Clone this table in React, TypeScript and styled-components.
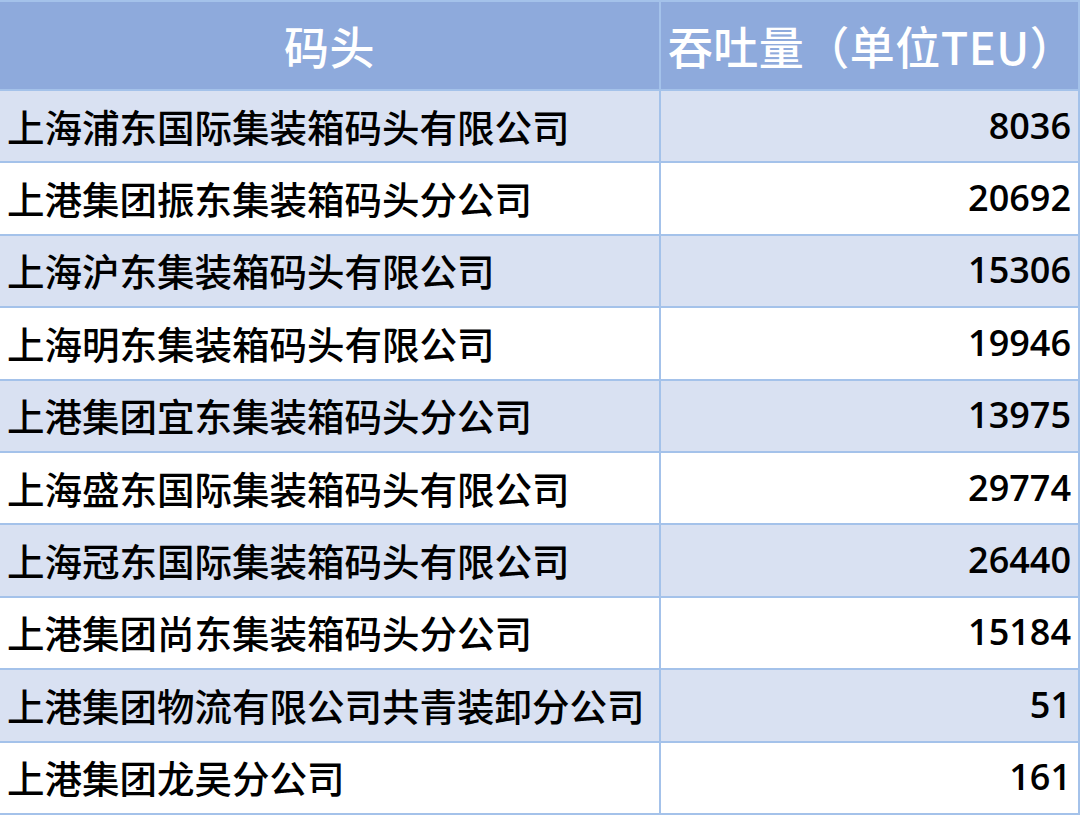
import styled, { createGlobalStyle } from 'styled-components';

const GlobalStyle = createGlobalStyle`
  html, body {
    margin: 0;
    padding: 0;
    background: #ffffff;
  }
`;

const lineColor = '#a4c2ea';

const Table = styled.div`
  width: 1080px;
  height: 815px;
  display: grid;
  grid-template-columns: 661px 419px;
  grid-template-rows: 89px repeat(10, 72.4px);
  border-top: 2px solid ${lineColor};
  box-sizing: border-box;
  font-family: 'Noto Sans CJK SC', 'Noto Sans', sans-serif;
`;

const HeadCell = styled.div<{ $last?: boolean }>`
  background: #8eaadc;
  color: #ffffff;
  font-size: 45px;
  font-weight: 500;
  display: flex;
  align-items: center;
  justify-content: center;
  border-bottom: 2px solid ${lineColor};
  border-right: 2px solid ${lineColor};
  box-sizing: border-box;
  padding-left: ${(p) => (p.$last ? '4px' : '0')};
  letter-spacing: 0.5px;
`;

const Cell = styled.div<{ $shade: boolean; $num?: boolean }>`
  background: ${(p) => (p.$shade ? '#d9e1f2' : '#ffffff')};
  color: #000000;
  font-size: ${(p) => (p.$num ? '36px' : '37.5px')};
  font-weight: ${(p) => (p.$num ? 600 : 500)};
  display: flex;
  align-items: center;
  justify-content: ${(p) => (p.$num ? 'flex-end' : 'flex-start')};
  padding: ${(p) => (p.$num ? '0 7px 2px 0' : '0 0 2px 7px')};
  border-bottom: 2px solid ${lineColor};
  border-right: 2px solid ${lineColor};
  box-sizing: border-box;
  font-family: ${(p) =>
    p.$num ? "'Open Sans', 'Noto Sans', sans-serif" : "'Noto Sans CJK SC', sans-serif"};
  white-space: nowrap;
`;

const rows: [string, string][] = [
  ['上海浦东国际集装箱码头有限公司', '8036'],
  ['上港集团振东集装箱码头分公司', '20692'],
  ['上海沪东集装箱码头有限公司', '15306'],
  ['上海明东集装箱码头有限公司', '19946'],
  ['上港集团宜东集装箱码头分公司', '13975'],
  ['上海盛东国际集装箱码头有限公司', '29774'],
  ['上海冠东国际集装箱码头有限公司', '26440'],
  ['上港集团尚东集装箱码头分公司', '15184'],
  ['上港集团物流有限公司共青装卸分公司', '51'],
  ['上港集团龙吴分公司', '161'],
];

export default function App() {
  return (
    <>
      <GlobalStyle />
      <Table>
        <HeadCell>码头</HeadCell>
        <HeadCell $last>吞吐量（单位TEU）</HeadCell>
        {rows.map(([name, teu], i) => [
          <Cell key={name} $shade={i % 2 === 0}>
            {name}
          </Cell>,
          <Cell key={name + '-n'} $shade={i % 2 === 0} $num>
            {teu}
          </Cell>,
        ])}
      </Table>
    </>
  );
}
